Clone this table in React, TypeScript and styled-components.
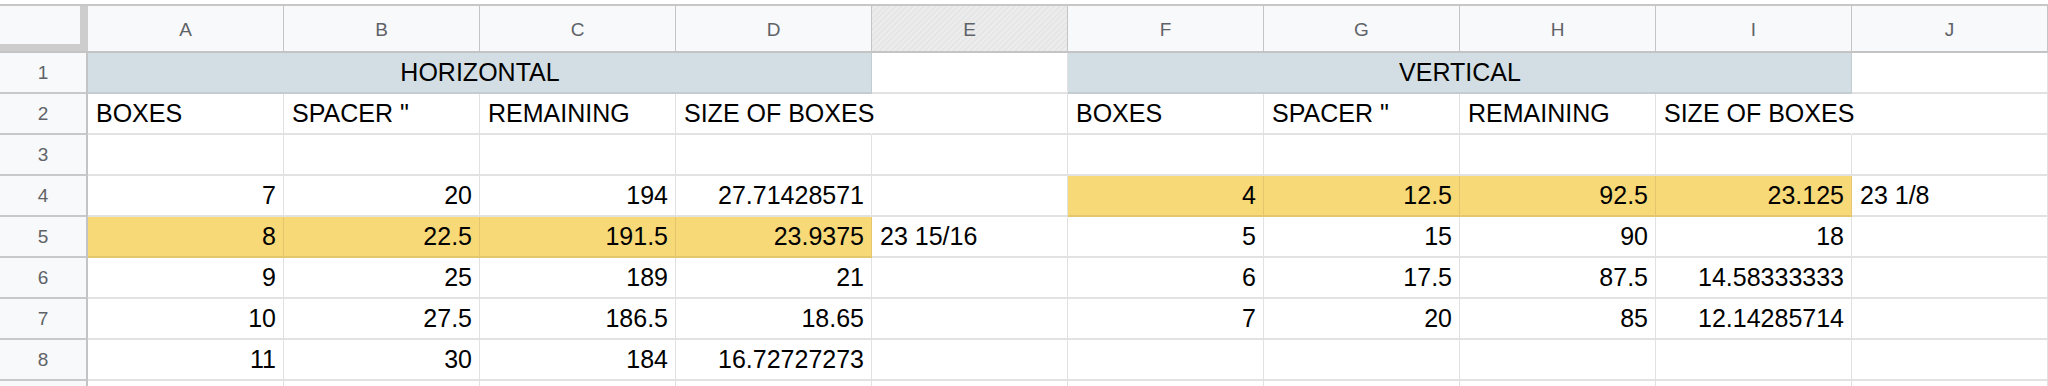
import React from "react";
import styled, { createGlobalStyle } from "styled-components";

const COLS = ["A", "B", "C", "D", "E", "F", "G", "H", "I", "J"];

type CellData = {
  text?: string;
  span?: number;
  align?: "left" | "right" | "center";
  fill?: "blue" | "yellow";
  overflow?: boolean;
};

const BLANK: CellData = {};
const EMPTY_ROW: CellData[] = COLS.map(() => BLANK);

const num = (text: string, fill?: "yellow"): CellData => ({ text, align: "right", fill });
const label = (text: string, overflow = false): CellData => ({ text, overflow });

// rows 1-8 are fully visible, row 9 only peeks in at the bottom edge
const ROWS: CellData[][] = [
  [
    { text: "HORIZONTAL", span: 4, align: "center", fill: "blue" },
    BLANK,
    { text: "VERTICAL", span: 4, align: "center", fill: "blue" },
    BLANK,
  ],
  [
    label("BOXES"),
    label('SPACER "'),
    label("REMAINING"),
    label("SIZE OF BOXES", true),
    BLANK,
    label("BOXES"),
    label('SPACER "'),
    label("REMAINING"),
    label("SIZE OF BOXES", true),
    BLANK,
  ],
  EMPTY_ROW,
  [
    num("7"),
    num("20"),
    num("194"),
    num("27.71428571"),
    BLANK,
    num("4", "yellow"),
    num("12.5", "yellow"),
    num("92.5", "yellow"),
    num("23.125", "yellow"),
    label("23 1/8"),
  ],
  [
    num("8", "yellow"),
    num("22.5", "yellow"),
    num("191.5", "yellow"),
    num("23.9375", "yellow"),
    label("23 15/16"),
    num("5"),
    num("15"),
    num("90"),
    num("18"),
    BLANK,
  ],
  [num("9"), num("25"), num("189"), num("21"), BLANK, num("6"), num("17.5"), num("87.5"), num("14.58333333"), BLANK],
  [num("10"), num("27.5"), num("186.5"), num("18.65"), BLANK, num("7"), num("20"), num("85"), num("12.14285714"), BLANK],
  [num("11"), num("30"), num("184"), num("16.72727273"), BLANK, BLANK, BLANK, BLANK, BLANK, BLANK],
];

const GlobalStyle = createGlobalStyle`
  html, body {
    margin: 0;
    padding: 0;
    background: #ffffff;
    overflow: hidden;
  }
`;

const FILLS = {
  blue: { bg: "#d2dee3", line: "#c3cdd1" },
  yellow: { bg: "#f7d978", line: "#e3c76c" },
};

function App() {
  return (
    <>
      <GlobalStyle />
      <Page>
        <Sheet>
          <Corner />
          {COLS.map((c) => (
            <ColHeader key={c} $active={c === "E"}>
              {c}
            </ColHeader>
          ))}

          {ROWS.map((row, r) => (
            <React.Fragment key={r}>
              <RowHeader>{r + 1}</RowHeader>
              {row.map((cell, i) => (
                <Cell
                  key={i}
                  $span={cell.span ?? 1}
                  $align={cell.align ?? "left"}
                  $fill={cell.fill}
                  $overflow={!!cell.overflow}
                >
                  {cell.text}
                </Cell>
              ))}
            </React.Fragment>
          ))}

          <RowHeader />
          {EMPTY_ROW.map((_, i) => (
            <Cell key={i} $span={1} $align="left" $overflow={false} />
          ))}
        </Sheet>
      </Page>
    </>
  );
}

const Page = styled.div`
  padding-top: 4px;
  width: 2048px;
  font-family: "Liberation Sans", Arial, sans-serif;
`;

const Sheet = styled.div`
  display: grid;
  grid-template-columns: 88px repeat(10, 196px);
  grid-template-rows: 47px repeat(9, 41px);
  border-top: 2px solid #c7c7c7;
`;

const Corner = styled.div`
  background: #f8f9fa;
  box-sizing: border-box;
  border-bottom: 2px solid #c4c4c4;
  box-shadow: inset -8px -7px 0 #cdcdcd;
`;

const ColHeader = styled.div<{ $active: boolean }>`
  display: flex;
  align-items: center;
  justify-content: center;
  box-sizing: border-box;
  border-bottom: 2px solid #c4c4c4;
  border-right: 1px solid #c4c4c4;
  background: ${(p) =>
    p.$active
      ? "repeating-linear-gradient(135deg, #e6e6e6 0 2px, #ececec 2px 4px)"
      : "#f8f9fa"};
  color: #5f6368;
  font-size: 19px;
  padding-top: 2px;

  &:last-of-type {
    border-right: none;
  }
`;

const RowHeader = styled.div`
  display: flex;
  align-items: center;
  justify-content: center;
  box-sizing: border-box;
  background: #f8f9fa;
  border-right: 2px solid #c4c4c4;
  border-bottom: 2px solid #c9c9c9;
  color: #5f6368;
  font-size: 19px;
`;

const Cell = styled.div<{
  $span: number;
  $align: "left" | "right" | "center";
  $fill?: "blue" | "yellow";
  $overflow: boolean;
}>`
  grid-column: span ${(p) => p.$span};
  display: flex;
  align-items: flex-end;
  justify-content: ${(p) =>
    p.$align === "right" ? "flex-end" : p.$align === "center" ? "center" : "flex-start"};
  box-sizing: border-box;
  padding: 0 7px 6px 8px;
  background: ${(p) => (p.$fill ? FILLS[p.$fill].bg : "#ffffff")};
  border-right: 1px solid
    ${(p) => (p.$overflow ? "transparent" : p.$fill ? FILLS[p.$fill].line : "#e2e2e2")};
  border-bottom: 2px solid ${(p) => (p.$fill ? FILLS[p.$fill].line : "#e2e2e2")};
  color: #000000;
  font-size: 25px;
  line-height: 28px;
  white-space: nowrap;
  overflow: ${(p) => (p.$overflow ? "visible" : "hidden")};
  z-index: ${(p) => (p.$overflow ? 1 : "auto")};
`;

export default App;
